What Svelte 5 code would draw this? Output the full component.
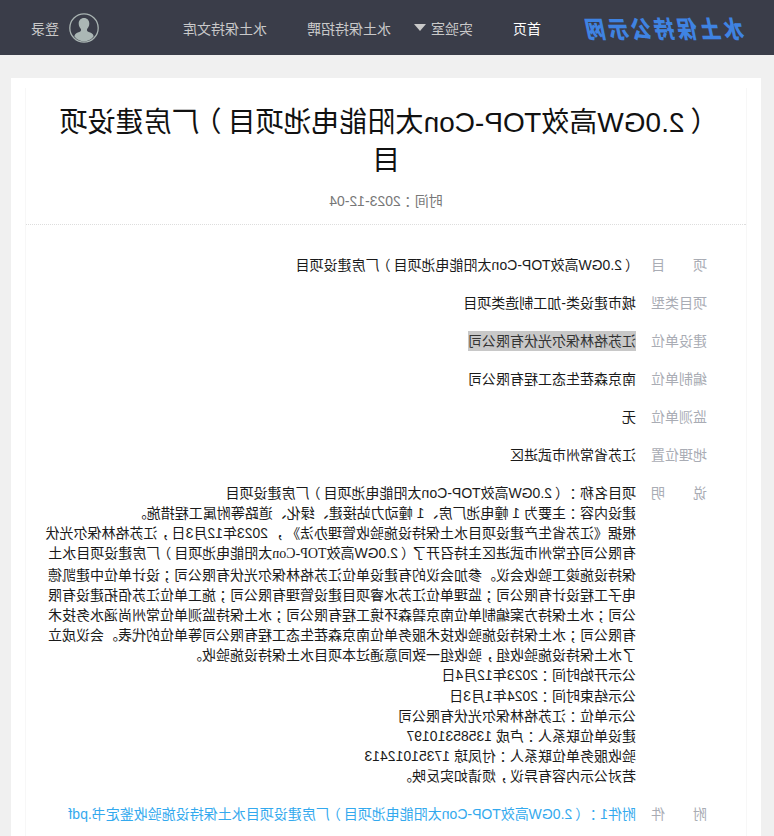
<script>
  const nav = [
    { label: '首页', active: true },
    { label: '实验室', caret: true },
    { label: '水土保持招聘' },
    { label: '水土保持文库' }
  ];
  const rows = [
    ['项　　目', '（2.0GW高效TOP-Con太阳能电池项目）厂房建设项目'],
    ['项目类型', '城市建设类-加工制造类项目'],
    ['建设单位', '江苏格林保尔光伏有限公司', true],
    ['编制单位', '南京森茬生态工程有限公司'],
    ['监测单位', '无'],
    ['地理位置', '江苏省常州市武进区']
  ];
  const desc = [
    '项目名称：（2.0GW高效TOP-Con太阳能电池项目）厂房建设项目',
    '建设内容：主要为 1 幢电池厂房、1 幢动力站接建、绿化、道路等附属工程措施。',
    '根据《江苏省生产建设项目水土保持设施验收管理办法》， 2023年12月3日，江苏格林保尔光伏',
    '有限公司在常州市武进区主持召开了（2.0GW高效[TOP-Con]太阳能电池项目）厂房建设项目水土',
    '保持设施竣工验收会议。参加会议的有建设单位江苏格林保尔光伏有限公司；设计单位中建凯德',
    '电子工程设计有限公司；监理单位江苏水睿项目建设管理有限公司；施工单位江苏佰拓建设有限',
    '公司；水土保持方案编制单位南京碧森环境工程有限公司；水土保持监测单位常州尚涵水务技术',
    '有限公司；水土保持设施验收技术服务单位南京森茬生态工程有限公司等单位的代表。会议成立',
    '了水土保持设施验收组，验收组一致同意通过本项目水土保持设施验收。',
    '公示开始时间：2023年12月4日',
    '公示结束时间：2024年1月3日',
    '公示单位：江苏格林保尔光伏有限公司',
    '建设单位联系人：卢成 13585310197',
    '验收服务单位联系人：付凤琼 17351012413',
    '若对公示内容有异议，烦请如实反映。'
  ];
  const split = (s) => s.split(/([（）：；，《》]|\[[^\]]+\])/).filter(Boolean);
  const isPunct = (s) => /^[（）：；，《》]$/.test(s);
  const isSerif = (s) => s.startsWith('[');
</script>

{#snippet text(s)}{#each split(s) as part}{#if isPunct(part)}<span class="p" class:open={part === '《'} class:close={part === '》'}>{part}</span>{:else if isSerif(part)}<span class="serif">{part.slice(1, -1)}</span>{:else}{part}{/if}{/each}{/snippet}

<div class="page">
  <header class="top">
    <div class="logo">水土保持公示网</div>
    <nav class="nav">
      {#each nav as item}
        <span class="nav-item" class:active={item.active} class:has-caret={item.caret}>
          {item.label}
          {#if item.caret}<i class="caret"></i>{/if}
        </span>
      {/each}
    </nav>
    <div class="user">
      <svg class="avatar" viewBox="0 0 30 30" width="30" height="30" aria-hidden="true">
        <circle cx="15" cy="15" r="14.2" fill="#3a3d49" stroke="#a9b4b2" stroke-width="1.3" />
        <path fill="#abb7b5" d="M15 5c-3.200 0-5.300 2.400-5.300 5.600 0 2.300.9 4.200 2.200 5.300.3 1 .2 1.800-.3 2.400-1.500 1-4.200 1.400-5.400 3-.5.7-.7 1.400-.8 2.200A13.600 13.600 0 0 0 15 28.600a13.600 13.600 0 0 0 9.600-5.100c-.1-.8-.3-1.500-.8-2.200-1.200-1.600-3.900-2-5.400-3-.5-.6-.6-1.400-.3-2.400 1.300-1.100 2.200-3 2.200-5.300C20.300 7.400 18.200 5 15 5z" />
      </svg>
      <span class="login">登录</span>
    </div>
  </header>

  <main class="card">
    <div class="inner">
      <div class="head">
        <h1>{@render text('（2.0GW高效TOP-Con太阳能电池项目）厂房建设项')}<br />目</h1>
        <p class="date">{@render text('时间：2023-12-04')}</p>
      </div>
      <div class="rows">
        {#each rows as [label, value, marked]}
          <div class="row">
            <span class="label">{label}</span>
            <span class="value"><span class:marked>{@render text(value)}</span></span>
          </div>
        {/each}
        <div class="row">
          <span class="label">说　　明</span>
          <div class="value desc">
            {#each desc as line}<div>{@render text(line)}</div>{/each}
          </div>
        </div>
        <div class="row">
          <span class="label">附　　件</span>
          <span class="value link">{@render text('附件1：（2.0GW高效TOP-Con太阳能电池项目）厂房建设项目水土保持设施验收鉴定书.pdf')}</span>
        </div>
      </div>
    </div>
  </main>
</div>

<style>
  :global(body) {
    margin: 0;
    background: #f0f0f0;
  }
  .page {
    width: 774px;
    height: 836px;
    overflow: hidden;
    transform: scaleX(-1);
    font-family: "Liberation Sans", "Noto Sans CJK SC", sans-serif;
    font-size: 14px;
    color: #1a1a1a;
    background: #f0f0f0;
    text-spacing-trim: space-all;
  }
  .p {
    display: inline-block;
    width: 1em;
    text-align: center;
    font-feature-settings: "palt";
  }
  .p.open {
    text-align: right;
  }
  .p.close {
    text-align: left;
  }
  .serif {
    font-family: "Liberation Serif", "Noto Sans CJK SC", serif;
  }
  .top {
    height: 55px;
    background: #3a3d49;
    display: flex;
    align-items: center;
    padding: 0 31px 0 29px;
    box-sizing: border-box;
  }
  .logo {
    width: 204px;
    flex: none;
    color: #3f83e2;
    font-size: 20px;
    font-weight: 900;
    font-style: italic;
    letter-spacing: 3px;
    white-space: nowrap;
    transform: scaleY(1.2);
  }
  .nav {
    display: flex;
    gap: 40px;
    flex: 1;
    color: #c9c9c9;
    white-space: nowrap;
  }
  .nav-item {
    display: flex;
    align-items: center;
    gap: 5px;
  }
  .nav-item.has-caret {
    margin-right: -17px;
  }
  .nav-item.active {
    color: #fff;
  }
  .caret {
    width: 0;
    height: 0;
    border-left: 6px solid transparent;
    border-right: 6px solid transparent;
    border-top: 7px solid #c9c9c9;
  }
  .user {
    display: flex;
    align-items: center;
    gap: 10px;
    color: #c9c9c9;
  }
  .avatar {
    display: block;
  }
  .card {
    margin: 23px 11px 0 13px;
    background: #fff;
    padding: 10px 14px 0;
    height: 760px;
    box-sizing: border-box;
  }
  .inner {
    border-left: 1px solid #f7f7f7;
    border-right: 1px solid #f7f7f7;
    height: 100%;
  }
  .head {
    padding: 0 25px;
    border-bottom: 1px dotted #ddd;
    height: 137px;
    box-sizing: border-box;
    text-align: center;
  }
  h1 {
    margin: 0;
    padding-top: 16px;
    font-size: 28px;
    font-weight: 400;
    line-height: 38px;
    color: #111;
  }
  .date {
    margin: 11px 0 0;
    color: #777;
    line-height: 20px;
  }
  .rows {
    padding: 30px 0 0 39px;
  }
  .row {
    display: flex;
    gap: 15px;
    line-height: 20px;
    margin-bottom: 18px;
  }
  .label {
    width: 56px;
    flex: none;
    color: #a9acb4;
    white-space: nowrap;
  }
  .value {
    white-space: nowrap;
  }
  .desc {
    line-height: 20.15px;
  }
  .marked {
    display: inline-block;
    background: #c8c8c8;
    color: #333;
  }
  .link {
    color: #33a9ee;
  }
</style>
